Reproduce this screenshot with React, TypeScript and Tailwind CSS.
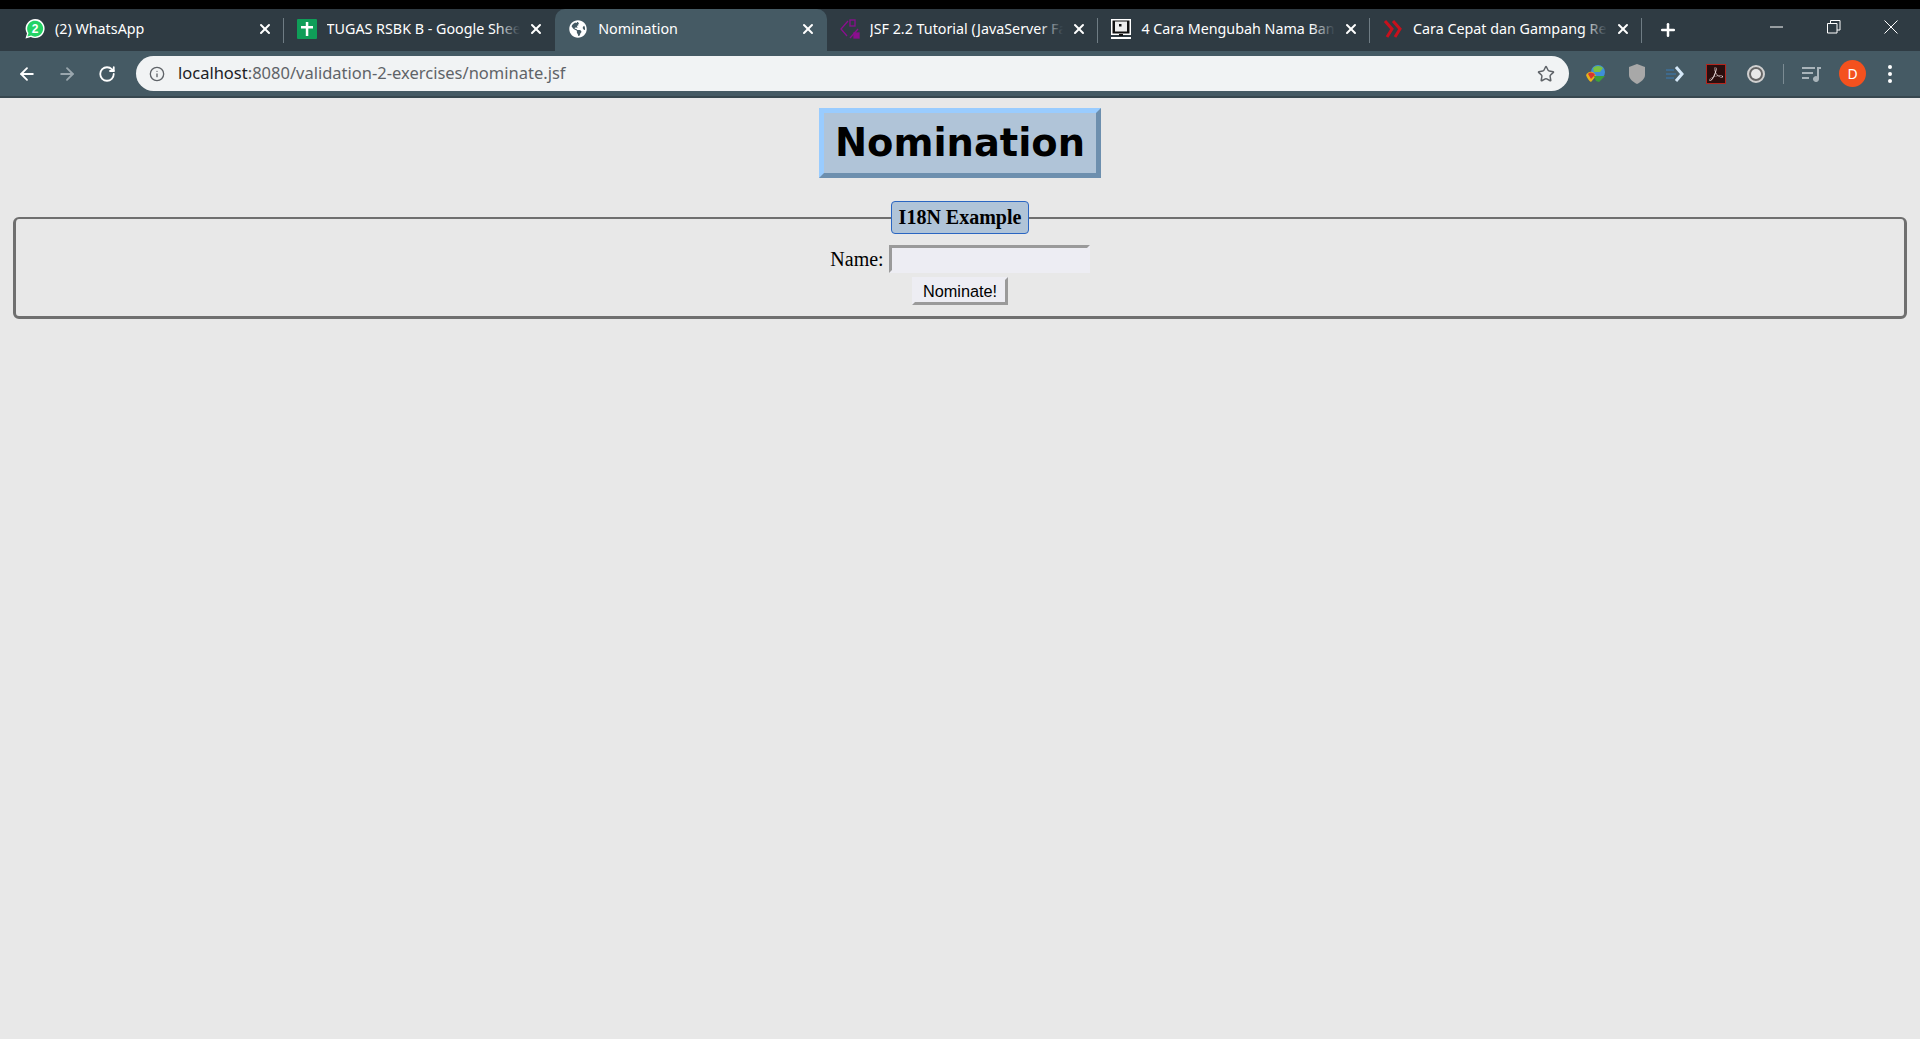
import React from 'react'
import { ArrowLeft, ArrowRight, Info, Plus, RotateCw, Star, X } from 'lucide-react'
import { FaGlobeAmericas } from 'react-icons/fa'
import { SiAdobeacrobatreader } from 'react-icons/si'

function WhatsAppIcon() {
  return (
    <svg width="20" height="20" viewBox="0 0 20 20">
      <path d="M0.5 19.5l1.5-5A9.5 9.5 0 1 1 5.8 18z" fill="#fff" />
      <path d="M2.4 17.6l1.1-3.5a8 8 0 1 1 2.7 2.5z" fill="#25d366" />
      <text x="10" y="14" textAnchor="middle" fontSize="12" fontWeight="700" fill="#fff" fontFamily="Liberation Sans, sans-serif">2</text>
    </svg>
  )
}

function SheetsIcon() {
  return (
    <svg width="20" height="20" viewBox="0 0 20 20">
      <rect width="20" height="20" rx="1" fill="#0f9d58" />
      <rect x="4" y="7" width="12" height="2.5" fill="#fff" />
      <rect x="8.8" y="3" width="2.5" height="14" fill="#fff" />
    </svg>
  )
}

function JsfIcon() {
  return (
    <svg width="20" height="20" viewBox="0 0 20 20" fill="none" stroke="#8b0f8f" strokeWidth="1.3">
      <path d="M8 2L1 10l6 7" />
      <path d="M18 10l-8 9" />
      <rect x="10" y="1" width="5" height="6" />
      <rect x="14" y="14" width="5" height="5" fill="#8b0f8f" />
    </svg>
  )
}

function ScreenIcon() {
  return (
    <svg width="20" height="20" viewBox="0 0 20 20">
      <rect width="20" height="16" fill="#fff" />
      <rect x="1.5" y="1.5" width="17" height="13" fill="#111" />
      <rect x="4" y="2.5" width="12" height="10" fill="#eee" />
      <rect x="8" y="5" width="2.5" height="2.5" fill="#111" />
      <rect x="8" y="15" width="4" height="2" fill="#111" />
      <rect y="18" width="20" height="2" fill="#fff" />
    </svg>
  )
}

function ChevronsIcon() {
  return (
    <svg width="20" height="18" viewBox="0 0 20 18" fill="none" stroke="#c8101c" strokeWidth="3">
      <path d="M2 1l7 8-5 8" />
      <path d="M10 1l7 8-5 8" />
    </svg>
  )
}

function TabItem({ icon, title, active, fade, divider }: {
  icon: React.ReactNode
  title: string
  active?: boolean
  fade?: boolean
  divider?: boolean
}) {
  return (
    <div className={`relative flex h-[42px] w-[271.6px] shrink-0 items-center pb-[2px] pl-[13px] pr-[11px] ${active ? 'rounded-t-[10px] bg-[#455a64]' : ''}`}>
      <div className="flex w-[20px] shrink-0 items-center justify-center">{icon}</div>
      <div className="relative ml-[10px] flex-1 overflow-hidden whitespace-nowrap text-[14.3px] text-white">
        {title}
        {fade && <div className="absolute inset-y-0 right-0 w-[24px] bg-gradient-to-r from-transparent to-[#2f3b43]" />}
      </div>
      <X size={16} strokeWidth={3} className="ml-[8px] shrink-0 text-white" />
      {divider && <div className="absolute right-0 top-[9px] h-[25px] w-px bg-[#6f7c84]" />}
    </div>
  )
}

function ExtensionIcons() {
  return (
    <div className="flex items-center">
      <svg width="22" height="22" viewBox="0 0 22 22" className="ml-[16px]">
        <circle cx="13" cy="9" r="7" fill="#3f8fd8" />
        <path d="M8 5a7 7 0 0 1 10 0l-3 4H9z" fill="#7ac143" />
        <path d="M1 12c3-5 8-4 10 1l-5 6C4 18 2 15 1 12z" fill="#e8b21a" />
        <path d="M3 11c2-2 5-2 7 1l-4 4z" fill="#d6362f" />
        <path d="M9 13h11l-6 6-3-1z" fill="#3d9e3a" />
      </svg>
      <svg width="16" height="20" viewBox="0 0 16 20" className="ml-[22px]">
        <path d="M8 0l8 3v8c0 4-4 7-8 9-4-2-8-5-8-9V3z" fill="#a8a8a8" />
      </svg>
      <svg width="20" height="20" viewBox="0 0 20 20" fill="none" className="ml-[21px]">
        <path d="M0 6h8M0 10h10M0 14h8" stroke="#3a7ab5" strokeWidth="1" />
        <path d="M10 3l6 7-6 7" stroke="#d5e8f8" strokeWidth="3" />
      </svg>
      <div className="ml-[20px] flex h-[20px] w-[20px] items-center justify-center border border-[#b3261e] bg-[#2a0e0e] text-[#e8d8d8]">
        <SiAdobeacrobatreader size={14} />
      </div>
      <div className="ml-[21px] flex h-[18px] w-[18px] items-center justify-center rounded-full border-2 border-[#d0d0d0] bg-[#666]">
        <div className="h-[10px] w-[10px] rounded-full bg-[#e8e8e8]" />
      </div>
      <div className="ml-[18px] h-[20px] w-px bg-[#7b8b93]" />
      <svg width="20" height="16" viewBox="0 0 20 16" className="ml-[18px]" fill="#a9b4ba">
        <rect y="1" width="13" height="2" />
        <rect y="6" width="11" height="2" />
        <rect y="11" width="7" height="2" />
        <path d="M15 1h4v2h-2v10a3 3 0 1 1-2-2.8z" />
      </svg>
      <div className="ml-[17px] flex h-[27px] w-[27px] items-center justify-center rounded-full bg-[#f4511e] text-[14px] text-white">D</div>
      <div className="ml-[22px] flex flex-col gap-[3px]">
        <div className="h-[4px] w-[4px] rounded-full bg-white" />
        <div className="h-[4px] w-[4px] rounded-full bg-white" />
        <div className="h-[4px] w-[4px] rounded-full bg-white" />
      </div>
    </div>
  )
}

export default function App() {
  return (
    <div className="flex min-h-screen flex-col bg-[#e8e8e8]">
      <div className="h-[9px] bg-black" />

      {/* tab strip */}
      <div className="flex h-[42px] items-center bg-[#2f3b43] pl-[12px] font-['Noto_Sans',sans-serif]">
        <TabItem icon={<WhatsAppIcon />} title="(2) WhatsApp" divider />
        <TabItem icon={<SheetsIcon />} title="TUGAS RSBK B - Google Shee" fade />
        <TabItem icon={<FaGlobeAmericas size={18} className="text-white" />} title="Nomination" active />
        <TabItem icon={<JsfIcon />} title="JSF 2.2 Tutorial (JavaServer Fa" fade divider />
        <TabItem icon={<ScreenIcon />} title="4 Cara Mengubah Nama Ban" fade divider />
        <TabItem icon={<ChevronsIcon />} title="Cara Cepat dan Gampang Re" fade divider />
        <Plus size={20} strokeWidth={3} className="ml-[16px] text-white" />
        <div className="ml-auto flex items-center pb-[6px]">
          <svg width="14" height="14" viewBox="0 0 14 14" stroke="#fff" fill="none" className="mr-[43px]"><path d="M0 7h13" /></svg>
          <svg width="14" height="14" viewBox="0 0 14 14" stroke="#fff" fill="none" className="mr-[43px]"><path d="M.5 3.5h9.5v9.5H.5zM3.5 3.5V.5h9.5V10h-3" /></svg>
          <svg width="14" height="14" viewBox="0 0 14 14" stroke="#fff" fill="none" className="mr-[22px]"><path d="M.5.5l13 13M13.5.5l-13 13" /></svg>
        </div>
      </div>

      {/* toolbar */}
      <div className="flex h-[47px] items-center border-b-[2px] border-[#37474f] bg-[#455a64] font-['Noto_Sans',sans-serif]">
        <ArrowLeft size={20} strokeWidth={2.2} className="ml-[17px] text-white" />
        <ArrowRight size={20} strokeWidth={2.2} className="ml-[20px] text-[#9aa7ae]" />
        <RotateCw size={18} strokeWidth={2.4} className="ml-[21px] text-white" />
        <div className="ml-[20px] flex h-[35px] w-[1433px] items-center rounded-full bg-[#f1f3f4] pl-[13px] pr-[14px]">
          <Info size={16} strokeWidth={2} className="text-[#5f6368]" />
          <div className="ml-[13px] flex-1 text-[16.5px] text-[#5f6368]">
            <span className="text-[#202124]">localhost</span>:8080/validation-2-exercises/nominate.jsf
          </div>
          <Star size={18} strokeWidth={2} className="text-[#5f6368]" />
        </div>
        <ExtensionIcons />
      </div>

      {/* page */}
      <div className="flex flex-col items-center pt-[10px]">
        <h1 className="border-[5px] border-t-[#99ccff] border-l-[#99ccff] border-r-[#6d8fae] border-b-[#6d8fae] bg-[#b0c4d8] px-[11px] py-[6px] font-['DejaVu_Sans',sans-serif] text-[38.4px] leading-[48px] font-bold text-black">
          Nomination
        </h1>
        <fieldset className="mt-[23px] flex w-[1894px] flex-col items-center rounded-[6px] border-[3px] border-t-2 border-[#6f6f6f] pb-[11px]">
          <legend className="mx-auto rounded-[4px] border border-[#2a66c2] bg-[#b0c4d8] px-[7px] py-[3px] font-['Liberation_Serif',serif] text-[20px] leading-[25px] font-bold text-black">
            I18N Example
          </legend>
          <div className="mt-[10px] flex items-center font-['Liberation_Serif',serif] text-[20px] text-black">
            <span>Name:</span>
            <div className="ml-[5px] h-[28px] w-[201px] border-[3px] border-t-[#9a9a9a] border-l-[#9a9a9a] border-r-[#ededf3] border-b-[#ededf3] bg-[#ededf3]" />
          </div>
          <button className="mt-[3px] h-[28px] w-[96px] border-[3px] border-t-[#ededf3] border-l-[#ededf3] border-r-[#9a9a9a] border-b-[#9a9a9a] bg-[#ededf3] font-['Liberation_Sans',sans-serif] text-[16.3px] leading-none text-black">
            Nominate!
          </button>
        </fieldset>
      </div>
    </div>
  )
}
